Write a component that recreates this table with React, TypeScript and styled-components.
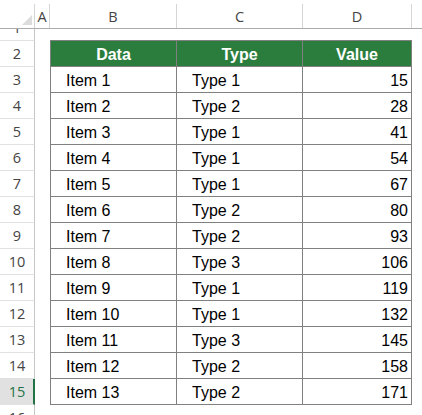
import React from "react";
import styled, { createGlobalStyle } from "styled-components";

const Global = createGlobalStyle`
  html, body { margin: 0; padding: 0; background: #ffffff; overflow: hidden; }
  * { box-sizing: border-box; }
`;

const Sheet = styled.div`
  width: 422px;
  height: 415px;
  display: flex;
  flex-direction: column;
  overflow: hidden;
  background: #ffffff;
`;

const ColumnHeaderBar = styled.div`
  display: flex;
  height: 29px;
  padding-top: 4px;
  border-bottom: 1px solid #ababab;
  flex-shrink: 0;
`;

const ColHead = styled.div<{ $w?: number }>`
  ${(p) => (p.$w ? `width: ${p.$w}px; flex-shrink: 0;` : "flex: 1;")}
  height: 24px;
  border-right: ${(p) => (p.$w ? "1px solid #d5d5d5" : "none")};
  display: flex;
  align-items: center;
  justify-content: center;
  font-family: "Open Sans", "Noto Sans", sans-serif;
  font-size: 14.5px;
  color: #444444;
  padding-top: 1px;
`;

const Corner = styled.div`
  width: 35px;
  height: 24px;
  flex-shrink: 0;
  border-right: 1px solid #d5d5d5;
  position: relative;
`;

const CornerTriangle = styled.div`
  position: absolute;
  right: 2px;
  bottom: 3px;
  width: 0;
  height: 0;
  border-left: 10px solid transparent;
  border-bottom: 10px solid #dcdcdc;
`;

const Body = styled.div`
  flex: 1;
  overflow: hidden;
`;

const Scroller = styled.div`
  display: flex;
  margin-top: -14px;
`;

const RowHeaders = styled.div`
  display: flex;
  flex-direction: column;
  width: 35px;
  flex-shrink: 0;
`;

const RowHead = styled.div<{ $active?: boolean }>`
  height: 26px;
  border-bottom: 1px solid #e1e1e1;
  border-right: ${(p) => (p.$active ? "2px solid #217346" : "1px solid #c6c6c6")};
  background: ${(p) => (p.$active ? "#e1e1e1" : "#ffffff")};
  color: ${(p) => (p.$active ? "#217346" : "#444444")};
  display: flex;
  align-items: center;
  justify-content: center;
  font-family: "Open Sans", "Noto Sans", sans-serif;
  font-size: 14.5px;
  padding-left: ${(p) => (p.$active ? "1px" : "0")};
`;

const Canvas = styled.div`
  padding-top: 25px;
  padding-left: 15px;
`;

const Table = styled.div`
  display: grid;
  grid-template-columns: 126px 126px 109px;
  border-top: 1px solid #808080;
  border-left: 1px solid #808080;
  width: max-content;
`;

const Cell = styled.div<{ $align?: "left" | "center" | "right"; $head?: boolean }>`
  height: 26px;
  border-right: 1px solid #808080;
  border-bottom: 1px solid #808080;
  display: flex;
  align-items: center;
  justify-content: ${(p) =>
    p.$align === "right" ? "flex-end" : p.$align === "center" ? "center" : "flex-start"};
  padding: ${(p) => (p.$align === "right" ? "2px 3px 0 0" : p.$align === "center" ? "2px 0 0 0" : "2px 0 0 15px")};
  font-family: "Liberation Sans", Arial, sans-serif;
  font-size: 16px;
  font-weight: ${(p) => (p.$head ? 700 : 400)};
  color: ${(p) => (p.$head ? "#ffffff" : "#000000")};
  background: ${(p) => (p.$head ? "#2b7d3e" : "#ffffff")};
  white-space: nowrap;
`;

const data: [string, string, number][] = [
  ["Item 1", "Type 1", 15],
  ["Item 2", "Type 2", 28],
  ["Item 3", "Type 1", 41],
  ["Item 4", "Type 1", 54],
  ["Item 5", "Type 1", 67],
  ["Item 6", "Type 2", 80],
  ["Item 7", "Type 2", 93],
  ["Item 8", "Type 3", 106],
  ["Item 9", "Type 1", 119],
  ["Item 10", "Type 1", 132],
  ["Item 11", "Type 3", 145],
  ["Item 12", "Type 2", 158],
  ["Item 13", "Type 2", 171],
];

export default function App() {
  const rowNums = Array.from({ length: 16 }, (_, i) => i + 1);
  return (
    <>
      <Global />
      <Sheet>
        <ColumnHeaderBar>
          <Corner>
            <CornerTriangle />
          </Corner>
          <ColHead $w={15}>A</ColHead>
          <ColHead $w={127}>B</ColHead>
          <ColHead $w={126}>C</ColHead>
          <ColHead $w={109}>D</ColHead>
          <ColHead />
        </ColumnHeaderBar>
        <Body>
          <Scroller>
            <RowHeaders>
              {rowNums.map((n) => (
                <RowHead key={n} $active={n === 15}>
                  {n}
                </RowHead>
              ))}
            </RowHeaders>
            <Canvas>
              <Table>
                <Cell $head $align="center">Data</Cell>
                <Cell $head $align="center">Type</Cell>
                <Cell $head $align="center">Value</Cell>
                {data.map(([item, type, value]) => (
                  <React.Fragment key={item}>
                    <Cell>{item}</Cell>
                    <Cell>{type}</Cell>
                    <Cell $align="right">{value}</Cell>
                  </React.Fragment>
                ))}
              </Table>
            </Canvas>
          </Scroller>
        </Body>
      </Sheet>
    </>
  );
}
